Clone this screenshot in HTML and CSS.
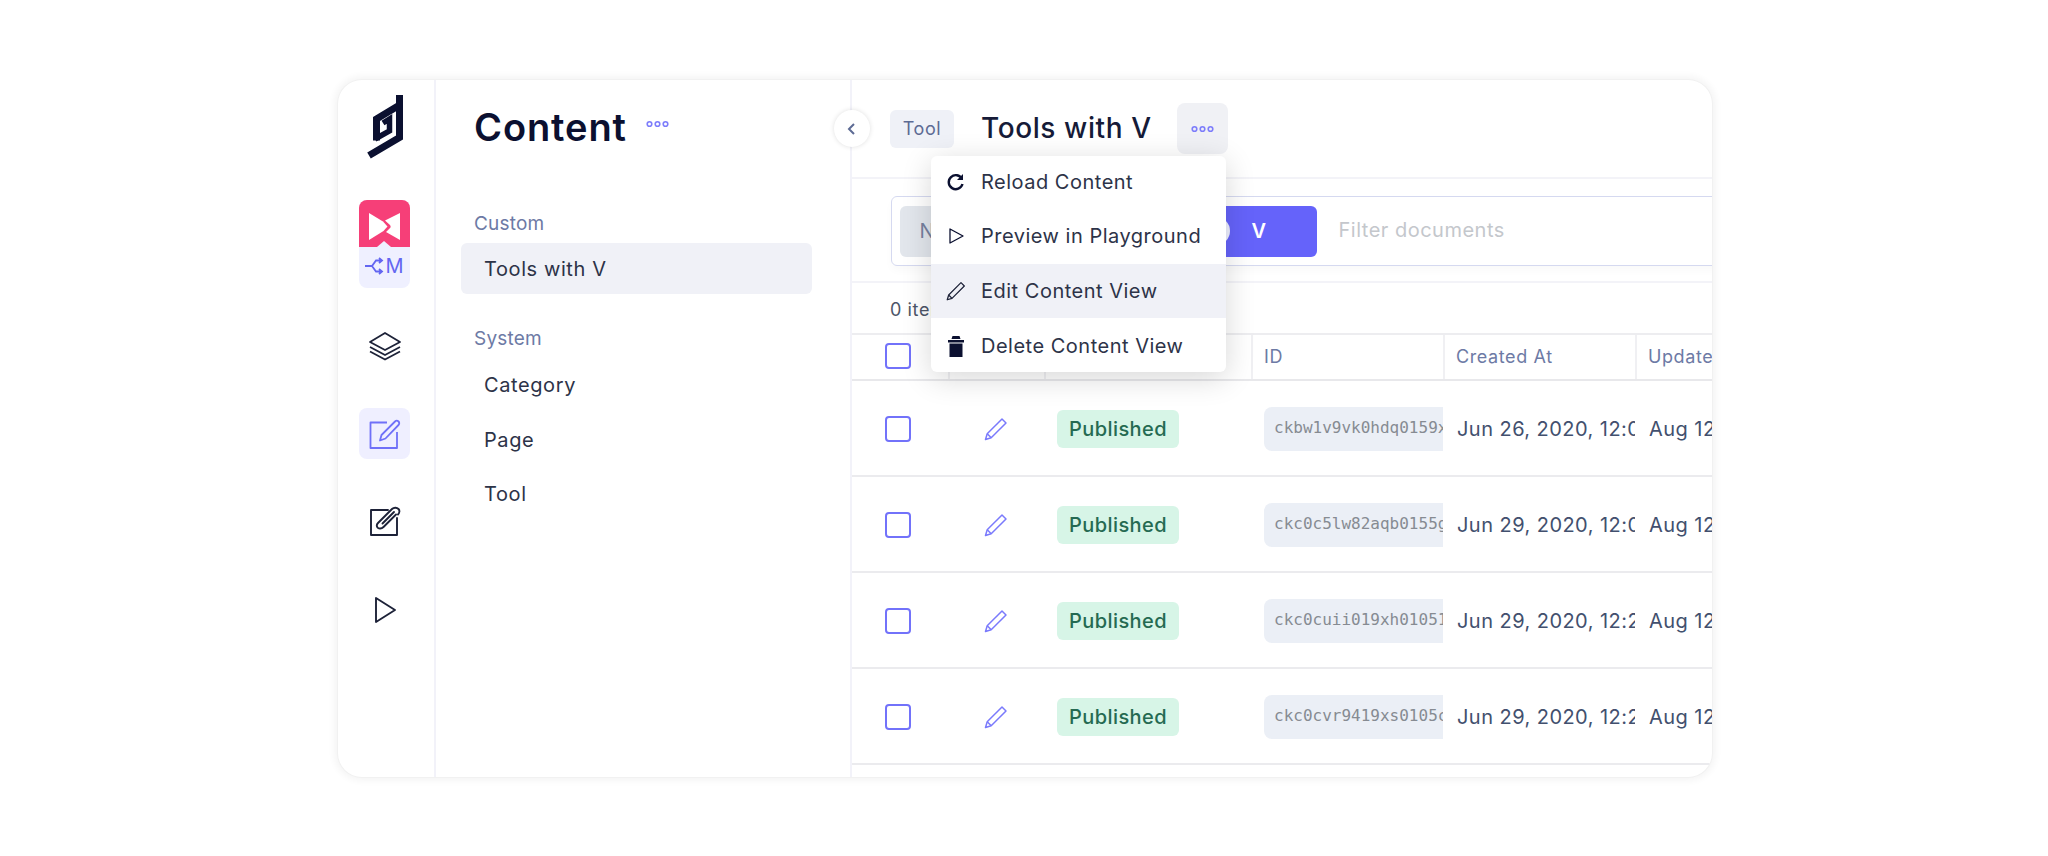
FILE: index.html
```html
<!DOCTYPE html>
<html lang="en">
<head>
<meta charset="utf-8">
<title>Content</title>
<link rel="stylesheet" href="styles.css">
</head>
<body>
<svg class="defs" width="0" height="0" aria-hidden="true">
  <defs>
    <g id="dots" fill="none" stroke="currentColor" stroke-width="1.6">
      <circle cx="3.5" cy="4" r="2.3"/><circle cx="11.5" cy="4" r="2.3"/><circle cx="19.5" cy="4" r="2.3"/>
    </g>
    <g id="pencil" fill="none" stroke="currentColor" stroke-width="1.5" stroke-linejoin="round">
      <path d="M1.5 22.5 L3.2 16.8 L18 2 L22 6 L7.200 20.800 Z"/>
      <path d="M3.2 16.8 L7.200 20.800"/>
    </g>
  </defs>
</svg>
<div class="page">
  <div class="card">
    <nav class="rail">
      <svg class="logo" viewBox="0 0 50 74" width="50" height="74">
        <g fill="none" stroke="#0b1030">
          <path stroke-width="7" d="M9 67.500 L39.500 49.500 V7"/>
          <path stroke-width="7" d="M38 18 L16.500 31 V52.500"/>
          <path stroke-width="5.500" d="M15 51 L29.500 43 V31 L23 35"/>
        </g>
      </svg>
      <div class="project">
        <div class="project-top">
          <svg viewBox="0 0 51 47" width="51" height="47">
            <path fill="#fff" d="M10 13 L24 21.500 L28.500 26.500 L24.500 31 L10 40 Z"/>
            <path fill="#fff" d="M41 13 V40 L27 32 L31.500 27.500 Q32 26 31 25 L26 20.500 Z"/>
            <path fill="#eff0ff" d="M18 47 L25 41 L32 47 Z"/>
          </svg>
        </div>
        <div class="project-key">
          <svg viewBox="0 0 19 18" width="19" height="18">
            <path fill="none" stroke="#6366f1" stroke-width="1.800" d="M0 9 H7 L11 3.500 H17 M7 9 L11 14.500 H17 M14 1 L17 3.500 L14 6 M14 12 L17 14.500 L14 17"/>
          </svg>
          <span>M</span>
        </div>
      </div>
      <div class="rail-item rail-layers">
        <svg viewBox="0 0 34 30" width="34" height="30" class="ink" fill="none" stroke="currentColor" stroke-width="1.800" stroke-linejoin="round">
          <path d="M17 2 L32 11 L17 19 L2 11 Z"/>
          <path d="M2 16 L17 24 L32 16"/>
          <path d="M2 20.500 L17 28.500 L32 20.500"/>
        </svg>
      </div>
      <div class="rail-item rail-active">
        <svg viewBox="0 0 32 32" width="32" height="32" fill="none" stroke="currentColor" stroke-width="1.800" stroke-linejoin="round">
          <path d="M18 4.500 H1.500 V30 H28 V14"/>
          <path d="M11 22.500 L12.500 17 L26 3.500 C27 2.500 28.500 2.500 29.500 3.500 C30.500 4.500 30.500 6 29.500 7 L16.500 20.500 Z"/>
        </svg>
      </div>
      <div class="rail-item">
        <svg viewBox="0 0 32 32" width="32" height="32" class="ink ink-up" fill="none" stroke="currentColor" stroke-width="1.900" stroke-linejoin="round" stroke-linecap="round">
          <path d="M19 5 H2 V30 H28 V13"/>
          <path d="M27 9.500 L14.500 22 C12.500 24 9.500 24 8.500 22.500 C7.500 21 7.500 19.500 9 18 L23 4 C25 2 28 2.500 29.500 4 C31 5.500 30.500 8 29 9.500"/>
          <path d="M13.500 18.500 L25 7"/>
        </svg>
      </div>
      <div class="rail-item">
        <svg viewBox="0 0 24 28" width="24" height="28" class="ink" fill="none" stroke="currentColor" stroke-width="1.900" stroke-linejoin="round">
          <path d="M3 2 L22 14 L3 26 Z"/>
        </svg>
      </div>
    </nav>

    <aside class="panel">
      <div class="panel-head">
        <h1 class="panel-title">Content</h1>
        <svg class="dots" viewBox="0 0 23 8" width="23" height="8"><use href="#dots"/></svg>
      </div>
      <div class="nav-label nav-custom">Custom</div>
      <div class="nav-item nav-selected">Tools with V</div>
      <div class="nav-label nav-system">System</div>
      <div class="nav-item">Category</div>
      <div class="nav-item">Page</div>
      <div class="nav-item">Tool</div>
    </aside>

    <main class="main">
      <header class="main-head">
        <span class="tag">Tool</span>
        <h2 class="main-title">Tools with V</h2>
        <button class="dots-btn" type="button"><svg class="dots" viewBox="0 0 23 8" width="23" height="8"><use href="#dots"/></svg></button>
      </header>
      <section class="filter-wrap">
        <div class="filter">
          <span class="chip chip-name">Name</span>
          <span class="chip chip-value"><i class="chip-dot"></i><b>V</b></span>
          <span class="filter-hint">Filter documents</span>
        </div>
      </section>
      <div class="count">0 items</div>
      <div class="table">
        <div class="row row-head">
          <div class="cell cell-check"><i class="box"></i></div>
          <div class="cell cell-edit"></div>
          <div class="cell cell-stage"></div>
          <div class="cell cell-id">ID</div>
          <div class="cell cell-date">Created At</div>
          <div class="cell cell-date">Updated At</div>
        </div>
        <div class="row">
          <div class="cell cell-check"><i class="box"></i></div>
          <div class="cell cell-edit"><svg viewBox="0 0 24 24" width="24" height="24"><use href="#pencil"/></svg></div>
          <div class="cell cell-stage"><span class="badge">Published</span></div>
          <div class="cell cell-id"><code class="id">ckbw1v9vk0hdq0159xk2m7a1</code></div>
          <div class="cell cell-date">Jun 26, 2020, 12:00 PM</div>
          <div class="cell cell-date">Aug 12, 2020, 3:14 PM</div>
        </div>
        <div class="row">
          <div class="cell cell-check"><i class="box"></i></div>
          <div class="cell cell-edit"><svg viewBox="0 0 24 24" width="24" height="24"><use href="#pencil"/></svg></div>
          <div class="cell cell-stage"><span class="badge">Published</span></div>
          <div class="cell cell-id"><code class="id">ckc0c5lw82aqb0155g3d9x2p</code></div>
          <div class="cell cell-date">Jun 29, 2020, 12:00 PM</div>
          <div class="cell cell-date">Aug 12, 2020, 3:14 PM</div>
        </div>
        <div class="row">
          <div class="cell cell-check"><i class="box"></i></div>
          <div class="cell cell-edit"><svg viewBox="0 0 24 24" width="24" height="24"><use href="#pencil"/></svg></div>
          <div class="cell cell-stage"><span class="badge">Published</span></div>
          <div class="cell cell-id"><code class="id">ckc0cuii019xh01051r8q4vz</code></div>
          <div class="cell cell-date">Jun 29, 2020, 12:20 PM</div>
          <div class="cell cell-date">Aug 12, 2020, 3:14 PM</div>
        </div>
        <div class="row">
          <div class="cell cell-check"><i class="box"></i></div>
          <div class="cell cell-edit"><svg viewBox="0 0 24 24" width="24" height="24"><use href="#pencil"/></svg></div>
          <div class="cell cell-stage"><span class="badge">Published</span></div>
          <div class="cell cell-id"><code class="id">ckc0cvr9419xs0105c7n2k6t</code></div>
          <div class="cell cell-date">Jun 29, 2020, 12:21 PM</div>
          <div class="cell cell-date">Aug 12, 2020, 3:14 PM</div>
        </div>
      </div>
    </main>

    <button class="collapse" type="button">
      <svg viewBox="0 0 12 16" width="12" height="16" fill="none" stroke="#5d6b94" stroke-width="2"><path d="M9 3 L4 8 L9 13"/></svg>
    </button>

    <div class="menu">
      <div class="menu-item">
        <svg viewBox="0 0 20 20" width="20" height="20" fill="none" stroke="#0b1030" stroke-width="2.400"><path d="M16 7 A7 7 0 1 0 16.500 12"/><path d="M17 2 V8 H11 Z" fill="#0b1030" stroke="none"/></svg>
        <span>Reload Content</span>
      </div>
      <div class="menu-item">
        <svg viewBox="0 0 20 20" width="20" height="20" fill="none" stroke="#0b1030" stroke-width="1.300" stroke-linejoin="round"><path d="M4 3 L17 10 L4 17 Z"/></svg>
        <span>Preview in Playground</span>
      </div>
      <div class="menu-item menu-hover">
        <svg viewBox="0 0 24 24" width="20" height="20" class="ink"><use href="#pencil"/></svg>
        <span>Edit Content View</span>
      </div>
      <div class="menu-item">
        <svg viewBox="0 0 20 22" width="20" height="22" fill="#0b1030"><path d="M2 5 H18 V7.500 H2 Z M6.500 1 H13.500 L14.500 4 H5.500 Z M3.500 8.500 H16.500 V22 H3.500 Z"/></svg>
        <span>Delete Content View</span>
      </div>
    </div>
  </div>
</div>
</body>
</html>
```
FILE: styles.css
```css
* { box-sizing: border-box; }
html, body { margin: 0; background: #fff; }
body {
  font-family: "Inter", "Liberation Sans", sans-serif;
  color: #0b1030;
  overflow: hidden;
  height: 856px;
  letter-spacing: 0.6px;
}
.defs { position: absolute; }
.page { padding: 80px 0 0 338px; }
.card {
  position: relative;
  display: flex;
  width: 1374px;
  height: 697px;
  background: #fff;
  border-radius: 24px;
  overflow: hidden;
  box-shadow: 0 0 0 1px #f1f1f1, 0 0 7px 4px rgba(0, 0, 0, 0.045);
}

/* rail */
.rail {
  flex: none;
  width: 98px;
  border-right: 2px solid #f2f2f9;
  display: flex;
  flex-direction: column;
  align-items: center;
  padding-top: 8px;
}
.logo { display: block; flex: none; margin-left: -2px; }
.project {
  width: 51px;
  height: 88px;
  margin-top: 38px;
  margin-left: -3px;
  border-radius: 8px;
  overflow: hidden;
  background: #eff0ff;
}
.project-top { height: 47px; background: #f63f78; }
.project-top svg { display: block; }
.project-key {
  height: 41px;
  display: flex;
  align-items: center;
  justify-content: center;
  gap: 1px;
  color: #6366f1;
  font-size: 20px;
  font-weight: 400;
  line-height: 1;
  letter-spacing: 0;
  padding-bottom: 4px;
}
.rail-item {
  width: 51px;
  height: 51px;
  flex: none;
  margin-top: 37px;
  margin-left: -3px;
  border-radius: 8px;
  display: flex;
  align-items: center;
  justify-content: center;
}
.rail-layers { margin-top: 32px; }
.rail-active { background: #efefff; color: #6f70f8; }
.ink { color: #1d2238; }
.ink-up { margin-top: -2px; }

/* panel */
.panel {
  flex: none;
  width: 416px;
  border-right: 2px solid #f2f2f9;
  padding-top: 24px;
}
.panel-head {
  display: flex;
  align-items: center;
  gap: 19px;
  padding-left: 38px;
  height: 46px;
}
.panel-title {
  margin: 0;
  font-size: 38px;
  line-height: 46px;
  font-weight: 600;
  letter-spacing: 0.9px;
  color: #0b1030;
}
.dots { display: block; color: #7d7dfb; }
.panel-head .dots { margin-top: -6px; }
.nav-label {
  margin-left: 38px;
  font-size: 19px;
  line-height: 24px;
  letter-spacing: 0.2px;
  color: #6d7aa5;
  font-weight: 400;
  height: 24px;
}
.nav-custom { margin-top: 62px; margin-bottom: 7px; }
.nav-system { margin-top: 33px; margin-bottom: 8px; }
.nav-item {
  margin: 0 0 3.5px 25px;
  width: 351px;
  height: 51px;
  padding: 1px 0 0 23px;
  display: flex;
  align-items: center;
  font-size: 20px;
  font-weight: 400;
  color: #2d3348;
  border-radius: 6px;
}
.nav-selected { background: #f0f1f7; }

/* main */
.main { flex: 1; min-width: 0; overflow: hidden; }
.main-head {
  height: 99px;
  border-bottom: 2px solid #f3f3f8;
  display: flex;
  align-items: center;
  padding-left: 38px;
}
.tag {
  width: 64px;
  height: 38px;
  border-radius: 6px;
  background: #eff1f7;
  color: #5d6b94;
  font-size: 18px;
  font-weight: 400;
  display: flex;
  align-items: center;
  justify-content: center;
}
.main-title {
  margin: 0 25px 2px 27px;
  font-size: 28px;
  line-height: 36px;
  font-weight: 500;
  letter-spacing: 0.6px;
  color: #161b38;
}
.dots-btn {
  width: 51px;
  height: 51px;
  padding: 0;
  border: 0;
  border-radius: 8px;
  background: #f0f1f5;
  display: flex;
  align-items: center;
  justify-content: center;
}
.filter-wrap {
  height: 104px;
  padding: 17px 0 0 39px;
  border-bottom: 2px solid #f3f3f8;
}
.filter {
  width: 860px;
  height: 70px;
  padding: 8.500px 0 8.500px 7.500px;
  border: 1.500px solid #d5d9f0;
  border-radius: 6px;
  display: flex;
  align-items: stretch;
  box-shadow: 0 5px 8px rgba(0, 0, 0, 0.025);
}
.chip {
  border-radius: 6px;
  display: flex;
  align-items: center;
  font-size: 20px;
  font-weight: 400;
}
.chip-name {
  width: 130px;
  padding-left: 20px;
  background: #e2e6ec;
  color: #76819f;
}
.chip-value {
  width: 277px;
  margin-left: 10px;
  padding-left: 162px;
  background: #6563fa;
  color: #fff;
  gap: 22px;
}
.chip-value b { font-weight: 600; font-size: 20px; }
.chip-dot {
  width: 28px;
  height: 28px;
  border-radius: 50%;
  background: #eef0ff;
}
.filter-hint {
  margin: 0 0 2px 22px;
  align-self: center;
  font-size: 20px;
  letter-spacing: 0.5px;
  color: #c4c7cc;
}
.count {
  height: 50px;
  padding: 2px 0 0 38px;
  display: flex;
  align-items: center;
  font-size: 18px;
  color: #4d5568;
  font-weight: 400;
}
.table { border-top: 2px solid #ededf0; }
.row {
  display: grid;
  grid-template-columns: 96px 96px 207px 192px 192px 192px;
  height: 96px;
  padding-top: 2px;
  border-bottom: 2px solid #ebebee;
}
.row-head {
  height: 46px;
  padding-top: 0;
  border-bottom-color: #e8e8eb;
  color: #6d7aa5;
  font-size: 18px;
  font-weight: 400;
}
.row-head .cell-check { padding-bottom: 3px; }
.row-head .cell + .cell { border-left: 2px solid #f0f0f3; }
.row-head .cell-id,
.row-head .cell-date { padding: 0 0 2px 11px; color: #6d7aa5; font-size: 18px; font-weight: 400; letter-spacing: 0.6px; }
.cell {
  display: flex;
  align-items: center;
  min-width: 0;
  overflow: hidden;
  white-space: nowrap;
}
.cell-check { padding-left: 33px; }
.cell-edit { justify-content: center; color: #7a7afc; }
.box {
  width: 26px;
  height: 26px;
  border: 2px solid #7272fa;
  border-radius: 4px;
  display: block;
}
.cell-stage { padding-left: 13px; }
.badge {
  width: 122px;
  height: 38px;
  border-radius: 6px;
  background: #d7f5e7;
  color: #256a52;
  font-size: 20px;
  font-weight: 500;
  letter-spacing: 0.4px;
  display: flex;
  align-items: center;
  justify-content: center;
}
.cell-id { padding-left: 13px; }
.id {
  flex: 1;
  min-width: 0;
  height: 44px;
  padding-left: 10px;
  border-radius: 8px 0 0 8px;
  background: #ebeff6;
  color: #868b92;
  font-family: "DejaVu Sans Mono", "Liberation Mono", monospace;
  font-size: 16px;
  letter-spacing: 0;
  line-height: 42px;
  overflow: hidden;
}
.cell-date {
  padding-left: 14px;
  font-size: 20px;
  letter-spacing: 0.45px;
  color: #42506e;
}

/* overlays */
.collapse {
  position: absolute;
  left: 496px;
  top: 30px;
  width: 36px;
  height: 37px;
  padding: 0 3px 0 0;
  border: 0;
  border-radius: 50%;
  background: #fff;
  box-shadow: 0 0 5px rgba(0, 0, 0, 0.13);
  display: flex;
  align-items: center;
  justify-content: center;
}
.menu {
  position: absolute;
  left: 593px;
  top: 76px;
  width: 295px;
  height: 216px;
  background: #fff;
  border-radius: 6px;
  box-shadow: 0 6px 30px rgba(0, 0, 0, 0.16);
  overflow: hidden;
}
.menu-item {
  height: 54px;
  display: flex;
  align-items: center;
  padding-left: 15px;
  gap: 15px;
  font-size: 20px;
  font-weight: 400;
  letter-spacing: 0.5px;
  color: #2d3348;
}
.menu-item:first-child { height: 52px; }
.menu-item:nth-child(2) { height: 56px; }
.menu-item:last-child { padding-top: 2px; }
.menu-item svg { flex: none; }
.menu-hover { background: #f0f1f7; }
```
